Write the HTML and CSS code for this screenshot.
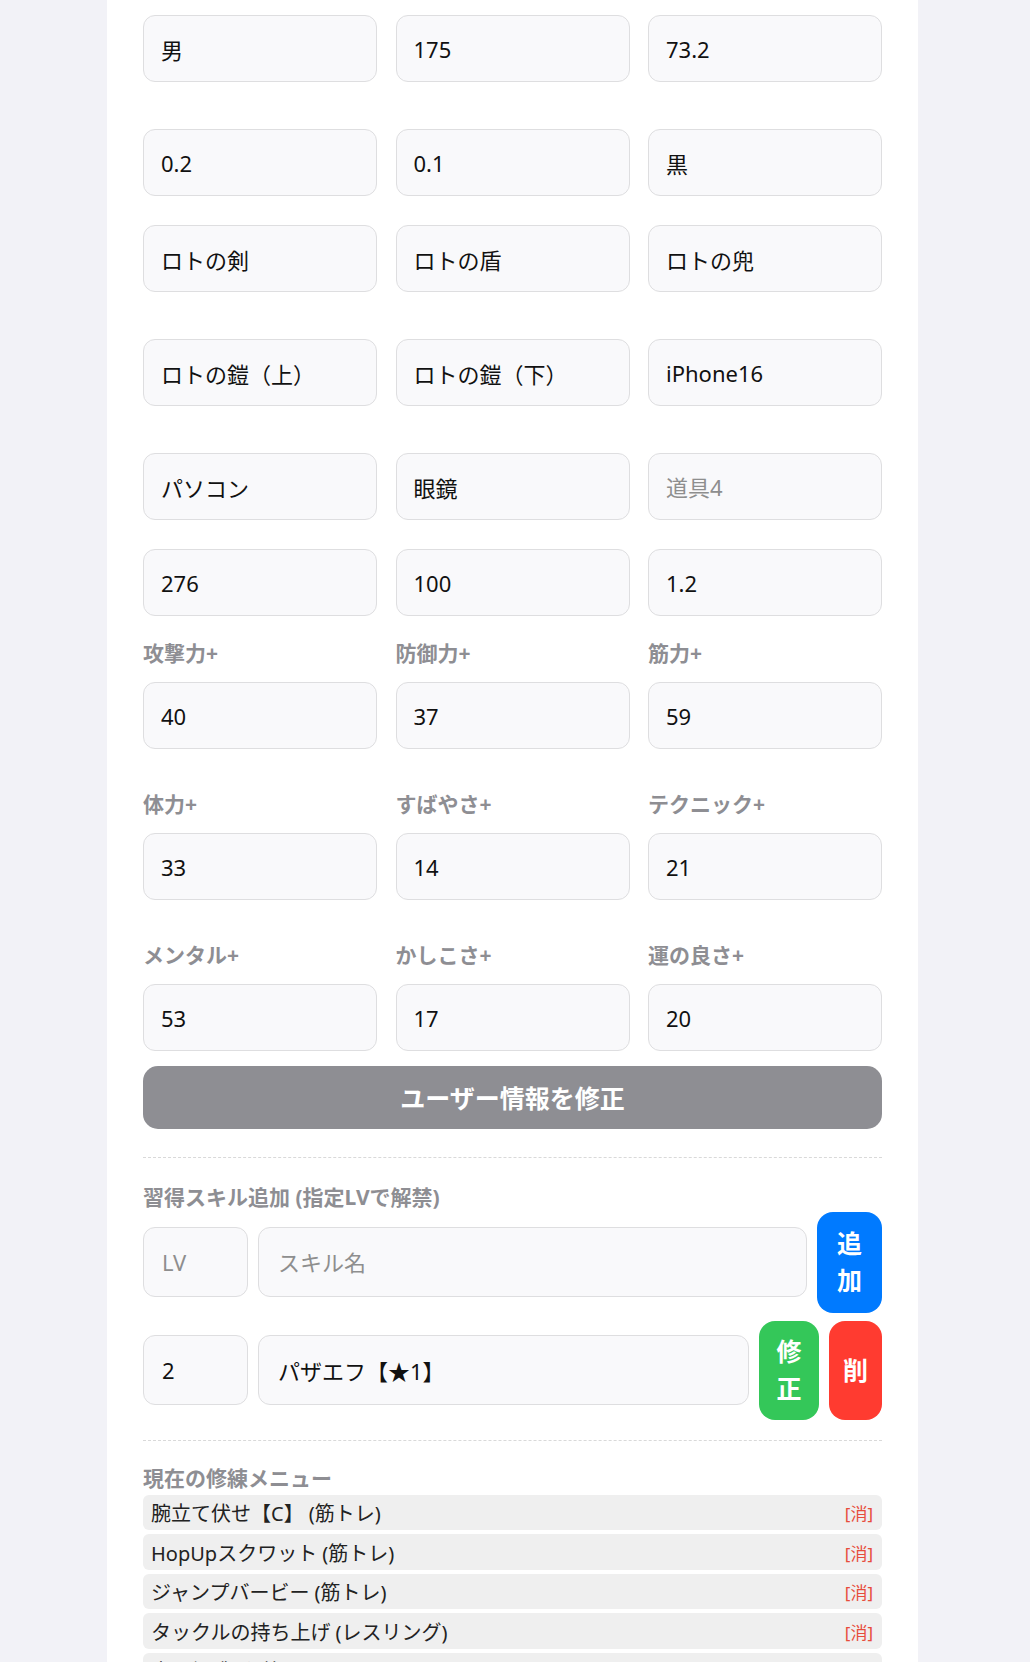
FILE: index.html
```html
<!DOCTYPE html>
<html lang="ja">
<head>
<meta charset="utf-8">
<title>ユーザー情報</title>
<link rel="stylesheet" href="styles.css">
</head>
<body>
<div class="page">
  <div class="grid">
    <input class="field" value="男">
    <input class="field" value="175">
    <input class="field" value="73.2">
  </div>
  <div class="grid gap-lg">
    <input class="field" value="0.2">
    <input class="field" value="0.1">
    <input class="field" value="黒">
  </div>
  <div class="grid">
    <input class="field" value="ロトの剣">
    <input class="field" value="ロトの盾">
    <input class="field" value="ロトの兜">
  </div>
  <div class="grid gap-lg">
    <input class="field" value="ロトの鎧（上）">
    <input class="field" value="ロトの鎧（下）">
    <input class="field" value="iPhone16">
  </div>
  <div class="grid gap-lg">
    <input class="field" value="パソコン">
    <input class="field" value="眼鏡">
    <input class="field" placeholder="道具4">
  </div>
  <div class="grid">
    <input class="field" value="276">
    <input class="field" value="100">
    <input class="field" value="1.2">
  </div>
  <div class="grid labeled">
    <div class="cell"><label class="lbl">攻撃力+</label><input class="field" value="40"></div>
    <div class="cell"><label class="lbl">防御力+</label><input class="field" value="37"></div>
    <div class="cell"><label class="lbl">筋力+</label><input class="field" value="59"></div>
  </div>
  <div class="grid labeled-lg">
    <div class="cell"><label class="lbl">体力+</label><input class="field" value="33"></div>
    <div class="cell"><label class="lbl">すばやさ+</label><input class="field" value="14"></div>
    <div class="cell"><label class="lbl">テクニック+</label><input class="field" value="21"></div>
  </div>
  <div class="grid labeled-lg">
    <div class="cell"><label class="lbl">メンタル+</label><input class="field" value="53"></div>
    <div class="cell"><label class="lbl">かしこさ+</label><input class="field" value="17"></div>
    <div class="cell"><label class="lbl">運の良さ+</label><input class="field" value="20"></div>
  </div>

  <button class="submit">ユーザー情報を修正</button>

  <hr class="divider">
  <h3 class="section">習得スキル追加 (指定LVで解禁)</h3>
  <div class="skill-row">
    <input class="field lv" placeholder="LV">
    <input class="field skill" placeholder="スキル名">
    <button class="btn btn-add">追加</button>
  </div>
  <div class="skill-row second">
    <input class="field lv" value="2">
    <input class="field skill" value="パザエフ【★1】">
    <button class="btn btn-edit">修正</button>
    <button class="btn btn-del">削</button>
  </div>

  <hr class="divider divider-2">
  <h3 class="section section-2">現在の修練メニュー</h3>
  <ul class="menu">
    <li class="item"><span>腕立て伏せ【C】 (筋トレ)</span><span class="del">[消]</span></li>
    <li class="item"><span>HopUpスクワット (筋トレ)</span><span class="del">[消]</span></li>
    <li class="item"><span>ジャンプバービー (筋トレ)</span><span class="del">[消]</span></li>
    <li class="item"><span>タックルの持ち上げ (レスリング)</span><span class="del">[消]</span></li>
    <li class="item"><span>立ち幅跳び (筋トレ)</span><span class="del">[消]</span></li>
  </ul>
</div>
</body>
</html>
```

FILE: styles.css
```css
html, body {
  margin: 0;
  padding: 0;
  background: #f2f2f7;
}

body {
  font-family: "Noto Sans", "Noto Sans CJK JP", sans-serif;
  color: #111;
}

.page {
  box-sizing: border-box;
  width: 811px;
  margin-left: 107px;
  min-height: 100vh;
  padding: 15.3px 36px 0 36px;
  background: #ffffff;
}

.grid {
  display: grid;
  grid-template-columns: repeat(3, minmax(0, 1fr));
  column-gap: 18.5px;
}

.grid + .grid {
  margin-top: 29px;
}

.grid.gap-lg {
  margin-top: 47px;
}

.grid.labeled {
  margin-top: 24.5px;
}

.grid.labeled-lg {
  margin-top: 42.5px;
}

.cell {
  display: flex;
  flex-direction: column;
  min-width: 0;
}

.lbl {
  display: block;
  font-size: 21px;
  font-weight: 700;
  line-height: 24px;
  color: #8e8e93;
  margin-bottom: 17.5px;
}

.field {
  box-sizing: border-box;
  width: 100%;
  min-width: 0;
  height: 67px;
  margin: 0;
  padding: 0 12px 0 17px;
  border: 1px solid #dedee0;
  border-radius: 12px;
  background: #f9f9fb;
  font-family: "Noto Sans", "Noto Sans CJK JP", sans-serif;
  font-size: 22px;
  color: #111;
  outline: none;
}

.field::placeholder {
  color: #8e8e8e;
  opacity: 1;
}

.submit {
  display: block;
  box-sizing: border-box;
  width: 100%;
  height: 63px;
  margin-top: 14.7px;
  border: 0;
  border-radius: 15px;
  background: #8e8e93;
  color: #ffffff;
  font-family: "Noto Sans", "Noto Sans CJK JP", sans-serif;
  font-size: 25px;
  font-weight: 700;
}

.divider {
  height: 0;
  margin: 28px 0 0 0;
  border: 0;
  border-top: 1px dashed #d9d9d9;
}

.divider-2 {
  margin-top: 20px;
}

.section {
  margin: 27.5px 0 2.5px 0;
  font-size: 21px;
  font-weight: 700;
  line-height: 24px;
  color: #8e8e93;
}

.section-2 {
  margin: 25.5px 0 4.5px 0;
}

.skill-row {
  display: flex;
  align-items: center;
  gap: 10px;
}

.skill-row.second {
  margin-top: 8px;
}

.field.lv {
  flex: 0 0 105px;
  width: 105px;
  height: 70px;
  padding-left: 18px;
}

.field.skill {
  flex: 1 1 auto;
  width: auto;
  height: 70px;
  padding-left: 19px;
}

.btn {
  align-self: stretch;
  display: flex;
  align-items: center;
  justify-content: center;
  box-sizing: border-box;
  flex: 0 0 auto;
  margin: 0;
  padding: 12px 10px;
  border: 0;
  border-radius: 16px;
  color: #ffffff;
  font-family: "Noto Sans", "Noto Sans CJK JP", sans-serif;
  font-size: 25px;
  font-weight: 700;
  line-height: 37.5px;
  text-align: center;
}

.btn-add {
  width: 65px;
  padding: 13px 10px;
  background: #007aff;
}

.btn-edit {
  width: 60px;
  background: #34c759;
}

.btn-del {
  width: 53px;
  background: #ff3b30;
}

.menu {
  list-style: none;
  margin: 0;
  padding: 0;
}

.item {
  display: flex;
  align-items: center;
  justify-content: space-between;
  box-sizing: border-box;
  height: 35.5px;
  margin-bottom: 4px;
  padding: 0 9px 0 8px;
  border-radius: 6px;
  background: #efefef;
  font-size: 20px;
  color: #222;
}

.del {
  font-size: 17px;
  color: #e74c3c;
}
```
